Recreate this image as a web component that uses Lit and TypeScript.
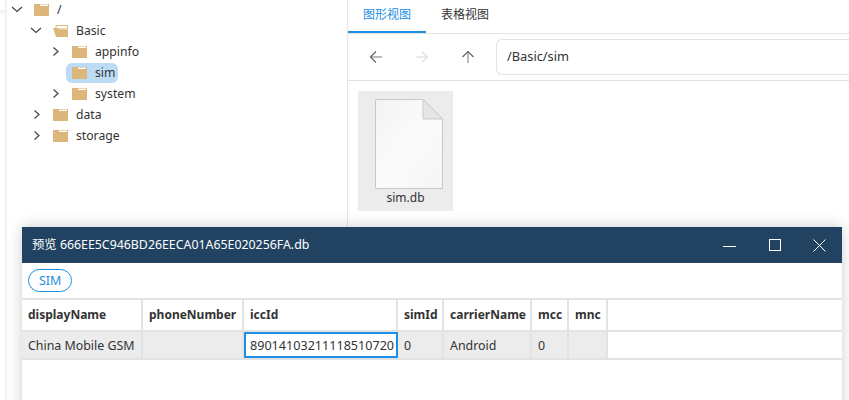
import { LitElement, html, css, svg } from "lit";
import { customElement } from "lit/decorators.js";

const tree = [
  { name: "/", depth: 0, arrow: "down", open: false, sel: false },
  { name: "Basic", depth: 1, arrow: "down", open: true, sel: false },
  { name: "appinfo", depth: 2, arrow: "right", open: false, sel: false },
  { name: "sim", depth: 2, arrow: "", open: false, sel: true },
  { name: "system", depth: 2, arrow: "right", open: false, sel: false },
  { name: "data", depth: 1, arrow: "right", open: false, sel: false },
  { name: "storage", depth: 1, arrow: "right", open: false, sel: false },
];

const cols = [
  { name: "displayName", w: 121, val: "China Mobile GSM" },
  { name: "phoneNumber", w: 101, val: "" },
  { name: "iccId", w: 154, val: "89014103211118510720", focus: true },
  { name: "simId", w: 46, val: "0" },
  { name: "carrierName", w: 88, val: "Android" },
  { name: "mcc", w: 37, val: "0" },
  { name: "mnc", w: 39, val: "" },
];

const folder = svg`<rect x="0" y="0" width="15" height="12" fill="#dcb67a"/><rect x="6" y="0.6" width="8" height="1.4" fill="#fff"/>`;
const folderOpen = svg`<path d="M3 0.5H14.5V4H3Z" fill="#fff" stroke="#dcb67a"/><path d="M0 3H5L7 4.5H15V12H3Z" fill="#dcb67a"/>`;

@customElement("app-root")
export class AppRoot extends LitElement {
  static styles = css`
    :host {
      display: block;
      position: relative;
      width: 849px;
      height: 400px;
      overflow: hidden;
      background: #fff;
      font-family: "Noto Sans", "Noto Sans CJK SC", sans-serif;
      font-size: 12.2px;
      color: #333;
    }
    .main {
      display: flex;
      height: 400px;
    }
    .rail {
      width: 5px;
      flex: none;
      border-right: 2px solid #f1f1f1;
    }
    .rail div {
      height: 3px;
      margin-top: 10px;
      background: #f4f4f4;
    }
    .tree {
      width: 340px;
      flex: none;
      border-right: 1px solid #e3e3e3;
    }
    .rows {
      margin-top: -1px;
    }
    .row {
      display: flex;
      align-items: center;
      height: 21px;
    }
    .chev {
      width: 17px;
      height: 21px;
      flex: none;
    }
    .item {
      display: flex;
      align-items: center;
      gap: 8px;
      height: 20px;
      margin-left: 3px;
      padding: 0 3px 0 6px;
      border-radius: 6px;
      line-height: 20px;
    }
    .item.sel {
      background: #bcdcf6;
    }
    .item svg {
      display: block;
      margin-top: 1px;
    }
    .right {
      flex: 1;
      min-width: 0;
    }
    .tabs {
      display: flex;
      height: 33px;
      border-bottom: 1px solid #e3e3e3;
    }
    .tab {
      width: 78px;
      height: 33px;
      box-sizing: border-box;
      text-align: center;
      line-height: 30px;
      font-size: 12px;
      color: #333;
    }
    .tab.on {
      color: #1a8fe3;
      border-bottom: 2px solid #1a8fe3;
    }
    .nav {
      display: flex;
      align-items: center;
      height: 46px;
      border-bottom: 1px solid #e3e3e3;
    }
    .nav svg {
      display: block;
      flex: none;
      margin-right: 30px;
    }
    .nav svg:first-child {
      margin-left: 20px;
    }
    .path {
      flex: 1;
      height: 36px;
      margin-left: -10px;
      box-sizing: border-box;
      border: 1px solid #e3e3e3;
      border-right: none;
      border-radius: 6px 0 0 6px;
      padding-left: 10px;
      line-height: 32px;
      font-size: 12.8px;
      color: #333;
    }
    .files {
      padding: 10px;
    }
    .file {
      width: 95px;
      height: 120px;
      background: #ececec;
      display: flex;
      flex-direction: column;
      align-items: center;
      padding-top: 8px;
      box-sizing: border-box;
    }
    .file svg {
      display: block;
      margin-left: 6px;
    }
    .file span {
      line-height: 18px;
      font-size: 12px;
    }
    .win {
      position: absolute;
      left: 22px;
      top: 227px;
      width: 820px;
      height: 190px;
      background: #fff;
      box-shadow: 0 0 14px rgba(0, 0, 0, 0.2);
    }
    .title {
      display: flex;
      align-items: center;
      height: 36px;
      background: #214361;
      color: #fff;
      padding-left: 10px;
      font-size: 12.35px;
    }
    .title .txt {
      flex: 1;
      margin-bottom: 2px;
    }
    .ctl {
      width: 45px;
      display: flex;
      justify-content: center;
    }
    .ctl svg {
      display: block;
    }
    .bar {
      height: 35px;
      display: flex;
      align-items: center;
      padding-left: 6px;
    }
    .chip {
      width: 44px;
      height: 23px;
      box-sizing: border-box;
      border: 1px solid #1a8fe3;
      border-radius: 12px;
      color: #1a8fe3;
      text-align: center;
      line-height: 21px;
      font-size: 12.4px;
    }
    .thead,
    .tbody {
      display: flex;
    }
    .thead {
      height: 34px;
      box-sizing: border-box;
      border-top: 2px solid #e3e3e3;
      border-bottom: 2px solid #e3e3e3;
    }
    .tbody {
      height: 28px;
      box-sizing: border-box;
      border-bottom: 2px solid #e3e3e3;
    }
    .th,
    .td {
      flex: none;
      box-sizing: border-box;
      border-right: 2px solid #e3e3e3;
      padding: 1px 0 0 6px;
      white-space: nowrap;
      overflow: hidden;
    }
    .th {
      font-weight: 700;
      font-size: 12px;
      line-height: 28px;
    }
    .td {
      background: #ececec;
      font-size: 12.4px;
      line-height: 25px;
    }
    .td.focus {
      background: #fff;
      border: 2px solid #1a8fe3;
      padding-left: 4px;
      font-size: 12.6px;
      line-height: 21px;
    }
  `;

  chevron(dir: string) {
    if (!dir) return html`<span class="chev"></span>`;
    const d = dir === "down" ? "M4 8L9 12.5L14 8" : "M7.5 6.5L12 10.5L7.5 14.5";
    return html`<svg class="chev" viewBox="0 0 17 21" fill="none" stroke="#444" stroke-width="1.2"><path d=${d} /></svg>`;
  }

  render() {
    return html`
      <div class="main">
        <div class="rail"><div></div></div>
        <div class="tree">
          <div class="rows">
            ${tree.map(
              (t) => html`
                <div class="row" style="padding-left:${1 + t.depth * 19}px">
                  ${this.chevron(t.arrow)}
                  <div class="item ${t.sel ? "sel" : ""}">
                    <svg width="15" height="12" viewBox="0 0 15 12">${t.open ? folderOpen : folder}</svg>
                    <span>${t.name}</span>
                  </div>
                </div>
              `
            )}
          </div>
        </div>
        <div class="right">
          <div class="tabs">
            <div class="tab on">图形视图</div>
            <div class="tab">表格视图</div>
          </div>
          <div class="nav">
            <svg width="16" height="16" viewBox="0 0 16 16" fill="none">
              <path d="M2.5 8H14" stroke="#aaa" stroke-width="1.6" /><path d="M8 2.5L2.5 8L8 13.5" stroke="#666" stroke-width="1.2" />
            </svg>
            <svg width="16" height="16" viewBox="0 0 16 16" fill="none">
              <path d="M2 8H13.5" stroke="#e6e6e6" stroke-width="1.6" /><path d="M8 2.5L13.5 8L8 13.5" stroke="#ddd" stroke-width="1.2" />
            </svg>
            <svg width="16" height="16" viewBox="0 0 16 16" fill="none">
              <path d="M8 14V2.5" stroke="#aaa" stroke-width="1.6" /><path d="M2.5 8L8 2.5L13.5 8" stroke="#666" stroke-width="1.2" />
            </svg>
            <div class="path">/Basic/sim</div>
          </div>
          <div class="files">
            <div class="file">
              <svg width="68" height="90" viewBox="0 0 68 90">
                <defs>
                  <linearGradient id="paper" x1="0" y1="0" x2="1" y2="1">
                    <stop offset="0" stop-color="#f3f3f3" />
                    <stop offset="0.5" stop-color="#fbfbfb" />
                    <stop offset="1" stop-color="#f5f5f5" />
                  </linearGradient>
                </defs>
                <path d="M0.5 0.5H48L67.5 20V89.5H0.5Z" fill="url(#paper)" stroke="#c9c9c9" />
                <path d="M48 0.5V20H67.5Z" fill="#e6e6e6" stroke="#c9c9c9" />
              </svg>
              <span>sim.db</span>
            </div>
          </div>
        </div>
      </div>
      <div class="win">
        <div class="title">
          <span class="txt">预览 666EE5C946BD26EECA01A65E020256FA.db</span>
          <div class="ctl"><svg width="14" height="14" viewBox="0 0 14 14" stroke="#fff" fill="none"><path d="M0 8.5H13" /></svg></div>
          <div class="ctl"><svg width="12" height="12" viewBox="0 0 12 12" stroke="#fff" fill="none"><rect x="0.5" y="0.5" width="11" height="11" /></svg></div>
          <div class="ctl"><svg width="13" height="13" viewBox="0 0 13 13" stroke="#fff" fill="none"><path d="M0.5 0.5L12.5 12.5M12.5 0.5L0.5 12.5" /></svg></div>
        </div>
        <div class="bar"><div class="chip">SIM</div></div>
        <div class="thead">
          ${cols.map((c) => html`<div class="th" style="width:${c.w}px">${c.name}</div>`)}
        </div>
        <div class="tbody">
          ${cols.map((c) => html`<div class="td ${c.focus ? "focus" : ""}" style="width:${c.w}px">${c.val}</div>`)}
        </div>
      </div>
    `;
  }
}
